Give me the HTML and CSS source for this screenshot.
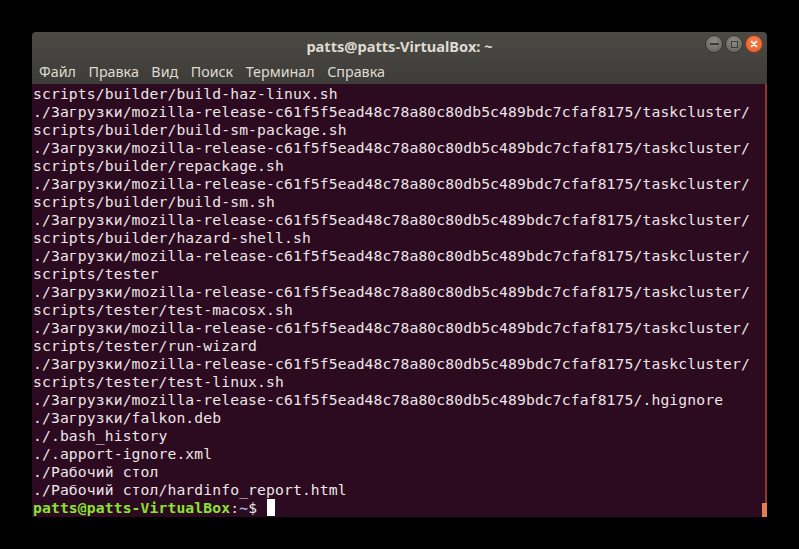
FILE: index.html
```html
<!DOCTYPE html>
<html lang="ru">
<head>
    <meta charset="UTF-8">
    <title>patts@patts-VirtualBox: ~</title>
    <link rel="stylesheet" href="styles.css">
</head>
<body>
    <div class="window">
        <div class="header">
            <div class="title-row">
                <div class="title">patts@patts-VirtualBox: ~</div>
                <div class="window-buttons">
                    <div class="wbtn wbtn-min"><span class="min-line"></span></div>
                    <div class="wbtn wbtn-max"><span class="max-box"></span></div>
                    <div class="wbtn wbtn-close">
                        <svg width="10" height="10" viewBox="0 0 10 10"><path d="M2.5 2.5 L7.5 7.5 M7.5 2.5 L2.5 7.5" stroke="#fff" stroke-width="1.6" stroke-linecap="round"/></svg>
                    </div>
                </div>
            </div>
            <div class="menu-row">
                <span class="menu-item">Файл</span>
                <span class="menu-item">Правка</span>
                <span class="menu-item">Вид</span>
                <span class="menu-item">Поиск</span>
                <span class="menu-item">Терминал</span>
                <span class="menu-item">Справка</span>
            </div>
        </div>
        <div class="terminal">
            <div class="output">
                <div class="line">scripts/builder/build-haz-linux.sh</div>
                <div class="line">./Загрузки/mozilla-release-c61f5f5ead48c78a80c80db5c489bdc7cfaf8175/taskcluster/</div>
                <div class="line">scripts/builder/build-sm-package.sh</div>
                <div class="line">./Загрузки/mozilla-release-c61f5f5ead48c78a80c80db5c489bdc7cfaf8175/taskcluster/</div>
                <div class="line">scripts/builder/repackage.sh</div>
                <div class="line">./Загрузки/mozilla-release-c61f5f5ead48c78a80c80db5c489bdc7cfaf8175/taskcluster/</div>
                <div class="line">scripts/builder/build-sm.sh</div>
                <div class="line">./Загрузки/mozilla-release-c61f5f5ead48c78a80c80db5c489bdc7cfaf8175/taskcluster/</div>
                <div class="line">scripts/builder/hazard-shell.sh</div>
                <div class="line">./Загрузки/mozilla-release-c61f5f5ead48c78a80c80db5c489bdc7cfaf8175/taskcluster/</div>
                <div class="line">scripts/tester</div>
                <div class="line">./Загрузки/mozilla-release-c61f5f5ead48c78a80c80db5c489bdc7cfaf8175/taskcluster/</div>
                <div class="line">scripts/tester/test-macosx.sh</div>
                <div class="line">./Загрузки/mozilla-release-c61f5f5ead48c78a80c80db5c489bdc7cfaf8175/taskcluster/</div>
                <div class="line">scripts/tester/run-wizard</div>
                <div class="line">./Загрузки/mozilla-release-c61f5f5ead48c78a80c80db5c489bdc7cfaf8175/taskcluster/</div>
                <div class="line">scripts/tester/test-linux.sh</div>
                <div class="line">./Загрузки/mozilla-release-c61f5f5ead48c78a80c80db5c489bdc7cfaf8175/.hgignore</div>
                <div class="line">./Загрузки/falkon.deb</div>
                <div class="line">./.bash_history</div>
                <div class="line">./.apport-ignore.xml</div>
                <div class="line">./Рабочий стол</div>
                <div class="line">./Рабочий стол/hardinfo_report.html</div>
                <div class="line"><span class="p-user">patts@patts-VirtualBox</span><span class="p-sep">:</span><span class="p-dir">~</span><span class="p-sign">$ </span><span class="cursor"></span></div>
            </div>
            <div class="scrollbar"><div class="thumb"></div></div>
        </div>
    </div>
</body>
</html>
```

FILE: styles.css
```css
* {
    margin: 0;
    padding: 0;
    box-sizing: border-box;
}

html, body {
    height: 100%;
}

body {
    background-color: #000;
    padding: 32px 0 0 32px;
}

.window {
    width: 735px;
    display: flex;
    flex-direction: column;
}

.header {
    height: 52px;
    background: linear-gradient(#4b4a45, #3d3c38);
    border-radius: 4px 4px 0 0;
    color: #dfdbd2;
    font-family: 'Noto Sans', 'Open Sans', sans-serif;
    font-size: 14.3px;
}

.title-row {
    height: 26px;
    position: relative;
    display: flex;
    justify-content: center;
    align-items: center;
}

.title {
    font-weight: bold;
    font-size: 14.6px;
    padding-top: 1px;
}

.window-buttons {
    position: absolute;
    right: 4px;
    top: 3px;
    display: flex;
    gap: 2px;
}

.wbtn {
    width: 18px;
    height: 18px;
    border-radius: 50%;
    display: flex;
    justify-content: center;
    align-items: center;
}

.wbtn-min, .wbtn-max {
    background: radial-gradient(circle at 50% 35%, #8e8c86, #5d5c57);
    border: 1px solid #35342f;
}

.min-line {
    width: 9px;
    height: 2px;
    background-color: #3c3b37;
}

.max-box {
    width: 7px;
    height: 7px;
    border: 1px solid #3c3b37;
}

.wbtn-close {
    background: radial-gradient(circle at 50% 35%, #f5834f, #e05a25);
    border: 1px solid #8a3b1a;
}

.menu-row {
    height: 26px;
    display: flex;
    align-items: center;
    gap: 12.5px;
    padding-left: 7px;
}

.terminal {
    height: 433px;
    background-color: #2c0a1f;
    position: relative;
    padding: 1px 0 0 1px;
    font-family: 'DejaVu Sans Mono', 'Liberation Mono', monospace;
    font-size: 14.7px;
    letter-spacing: 0.12px;
    line-height: 18px;
    color: #ece6e9;
}

.line {
    white-space: pre;
    height: 18px;
}

.p-user {
    color: #8ae234;
    font-weight: bold;
}

.p-sep {
    color: #d8d8d8;
}

.p-dir {
    color: #9cb4dc;
    font-weight: bold;
}

.p-sign {
    color: #e8e8e8;
}

.cursor {
    display: inline-block;
    width: 8px;
    height: 17px;
    background-color: #fff;
    vertical-align: top;
    margin-left: 1px;
}

.scrollbar {
    position: absolute;
    right: 0;
    top: 0;
    bottom: 0;
    width: 2px;
    background-color: #8a3a2c;
}

.thumb {
    position: absolute;
    right: 0;
    bottom: 0;
    width: 5px;
    height: 14px;
    background-color: #e08050;
}
```
